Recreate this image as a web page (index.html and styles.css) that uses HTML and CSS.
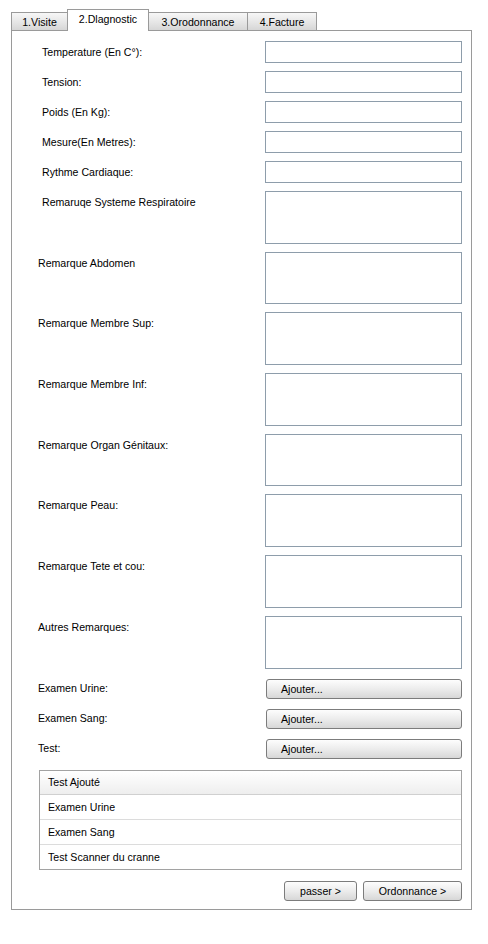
FILE: index.html
```html
<!DOCTYPE html>
<html lang="fr">
<head>
<meta charset="utf-8">
<title>Diagnostic</title>
<link rel="stylesheet" href="styles.css">
</head>
<body>
<div class="app">
  <div class="tabs">
    <div class="tab tab-visite">1.Visite</div>
    <div class="tab tab-diag active">2.Dlagnostic</div>
    <div class="tab tab-ord">3.Orodonnance</div>
    <div class="tab tab-fact">4.Facture</div>
  </div>
  <div class="panel">
    <div class="form">
      <label class="lbl indent">Temperature (En C°):</label><input class="field" type="text">
      <label class="lbl indent">Tension:</label><input class="field" type="text">
      <label class="lbl indent">Poids (En Kg):</label><input class="field" type="text">
      <label class="lbl indent">Mesure(En Metres):</label><input class="field" type="text">
      <label class="lbl indent">Rythme Cardiaque:</label><input class="field" type="text">
      <label class="lbl top indent">Remaruqe Systeme Respiratoire</label><textarea class="area"></textarea>
      <label class="lbl top">Remarque Abdomen</label><textarea class="area"></textarea>
      <label class="lbl top">Remarque Membre Sup:</label><textarea class="area"></textarea>
      <label class="lbl top">Remarque Membre Inf:</label><textarea class="area"></textarea>
      <label class="lbl top">Remarque Organ Génitaux:</label><textarea class="area"></textarea>
      <label class="lbl top">Remarque Peau:</label><textarea class="area"></textarea>
      <label class="lbl top">Remarque Tete et cou:</label><textarea class="area"></textarea>
      <label class="lbl top">Autres Remarques:</label><textarea class="area"></textarea>
      <label class="lbl">Examen Urine:</label><div class="btn-cell"><button class="btn add">Ajouter...</button></div>
      <label class="lbl">Examen Sang:</label><div class="btn-cell"><button class="btn add">Ajouter...</button></div>
      <label class="lbl">Test:</label><div class="btn-cell"><button class="btn add">Ajouter...</button></div>
      <div class="table">
        <div class="cell head">Test Ajouté</div>
        <div class="cell">Examen Urine</div>
        <div class="cell">Examen Sang</div>
        <div class="cell">Test Scanner du cranne</div>
      </div>
    </div>
    <div class="actions">
      <button class="btn nav pass">passer &gt;</button>
      <button class="btn nav ord">Ordonnance &gt;</button>
    </div>
  </div>
</div>
</body>
</html>
```
FILE: styles.css
```css
* {
  box-sizing: border-box;
}

html, body {
  margin: 0;
  padding: 0;
  background: #ffffff;
}

body {
  font-family: "Liberation Sans", Arial, sans-serif;
  font-size: 10.6px;
  color: #000;
}

.app {
  padding: 9px 0 0 11px;
  width: 488px;
}

/* Tabs */
.tabs {
  display: flex;
  align-items: flex-end;
  height: 22px;
  margin-bottom: -1px;
  position: relative;
  z-index: 1;
}

.tab {
  height: 18px;
  margin-bottom: 1px;
  margin-left: -1px;
  border: 1px solid #9a9a9a;
  border-bottom: none;
  background: linear-gradient(#f7f7f7, #e4e4e4 60%, #d6d6d6);
  text-align: center;
  line-height: 17px;
  padding-top: 1px;
  white-space: nowrap;
}

.tab:first-child {
  margin-left: 0;
}

.tab-visite { width: 57px; }
.tab-diag { width: 82px; }
.tab-ord { width: 100px; }
.tab-fact { width: 70px; }

.tab.active {
  height: 22px;
  margin-bottom: 0;
  background: #fff;
  line-height: 19px;
  padding-top: 0;
  position: relative;
  z-index: 2;
}

/* Panel */
.panel {
  width: 461px;
  border: 1px solid #9a9a9a;
  background: #fff;
  padding-bottom: 8px;
}

.form {
  display: grid;
  grid-template-columns: 1fr 197px;
  row-gap: 8px;
  padding: 10px 9px 0 26px;
}

.lbl {
  align-self: center;
  white-space: nowrap;
}

.lbl.indent {
  padding-left: 4px;
}

.lbl.top {
  align-self: start;
  padding-top: 5px;
}

.field {
  display: block;
  width: 197px;
  height: 22px;
  margin: 0;
  border: 1px solid #8e9dab;
  background: #fff;
  font: inherit;
  padding: 0 3px;
}

.area {
  display: block;
  width: 197px;
  height: 52.7px;
  margin: 0;
  border: 1px solid #8e9dab;
  background: #fff;
  resize: none;
  font: inherit;
  padding: 2px 3px;
}

.btn-cell {
  height: 22px;
  display: flex;
  justify-content: flex-end;
  align-items: flex-start;
  padding-top: 2px;
}

.btn {
  font: inherit;
  color: #000;
  height: 20px;
  margin: 0;
  border: 1px solid #7c7c7c;
  border-radius: 3px;
  background: linear-gradient(#fdfdfd, #ececec 50%, #d7d7d7);
  cursor: pointer;
}

.btn.add {
  width: 196px;
  text-align: left;
  padding: 0 0 0 14px;
}

/* Table */
.table {
  grid-column: 1 / -1;
  margin: 3px 0 0 1px;
  border: 1px solid #a2a2a2;
}

.cell {
  height: 25px;
  line-height: 24px;
  padding-left: 8px;
  border-bottom: 1px solid #dcdcdc;
}

.cell.head {
  height: 24px;
  line-height: 23px;
  background: linear-gradient(#ffffff, #eeeeee);
  border-bottom-color: #d0d0d0;
}

.cell:last-child {
  height: 24px;
  border-bottom: none;
}

/* Bottom actions */
.actions {
  display: flex;
  justify-content: flex-end;
  gap: 6px;
  padding: 11px 9px 0 0;
}

.btn.nav {
  text-align: center;
  padding: 0;
}

.btn.pass { width: 73px; }
.btn.ord { width: 99px; }
```
